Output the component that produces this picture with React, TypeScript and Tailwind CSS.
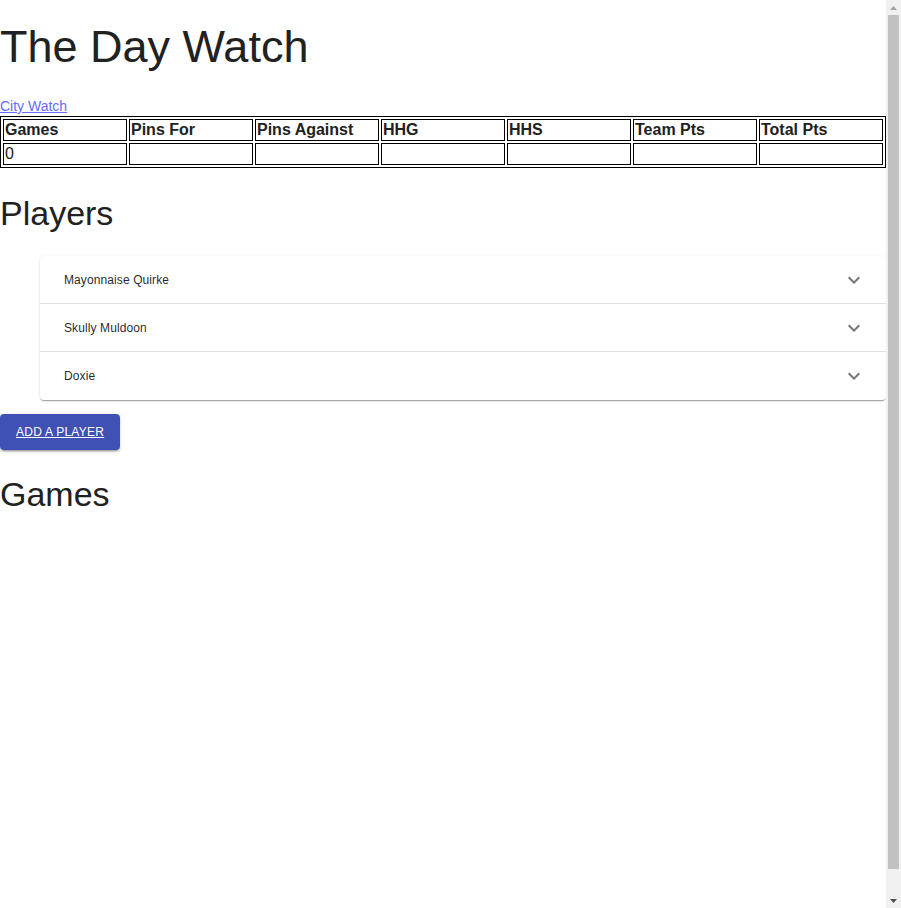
const columns = ['Games', 'Pins For', 'Pins Against', 'HHG', 'HHS', 'Team Pts', 'Total Pts'];
const players = ['Mayonnaise Quirke', 'Skully Muldoon', 'Doxie'];

const ExpandMore = () => (
  <svg viewBox="0 0 24 24" className="w-6 h-6 fill-[#757575]">
    <path d="M16.59 8.59L12 13.17 7.41 8.59 6 10l6 6 6-6z" />
  </svg>
);

// page scrollbar, as the browser draws it
const ScrollBar = () => (
  <div className="w-[15px] h-[908px] sticky top-0 bg-[#f1f1f1] flex flex-col shrink-0">
    <div className="h-[15px] flex items-center justify-center">
      <svg viewBox="0 0 7 4" className="w-[7px] h-[4px] fill-[#a3a3a3]">
        <path d="M0 4 3.5 0 7 4z" />
      </svg>
    </div>
    <div className="mx-[2px] h-[854px] bg-[#c1c1c1]" />
    <div className="flex-1" />
    <div className="h-[15px] flex items-center justify-center">
      <svg viewBox="0 0 7 4" className="w-[7px] h-[4px] fill-[#505050]">
        <path d="M0 0 7 0 3.5 4z" />
      </svg>
    </div>
  </div>
);

const App = () => {
  return (
    <div className="flex items-start bg-white min-h-[908px] font-['Liberation_Sans',Arial,sans-serif] text-[#212121]">
      <div className="w-[886px] shrink-0">
        <h1 className="text-[45px] leading-[52px] font-normal pt-[21px]">The Day Watch</h1>

        <div className="mt-[24px] text-[14px] leading-[18px]">
          <a href="#" className="text-[#646cff] underline">City Watch</a>
        </div>

        {/* Team stats */}
        <table className="mt-[1px] w-full table-fixed border border-black border-separate border-spacing-[2px] text-[16px] leading-[18px]">
          <thead>
            <tr>
              {columns.map((c) => (
                <th key={c} className="border border-black p-[1px] text-left font-bold">{c}</th>
              ))}
            </tr>
          </thead>
          <tbody>
            <tr>
              {columns.map((c, i) => (
                <td key={c} className="border border-black p-[1px] h-[22px]">{i === 0 ? '0' : ''}</td>
              ))}
            </tr>
          </tbody>
        </table>

        <h2 className="mt-[24px] text-[34px] leading-[42px] font-normal">Players</h2>

        <div className="mt-[22px] ml-[40px] bg-white rounded-[4px] shadow-[0px_2px_1px_-1px_rgba(0,0,0,0.2),0px_1px_1px_0px_rgba(0,0,0,0.14),0px_1px_3px_0px_rgba(0,0,0,0.12)]">
          {players.map((p, i) => (
            <div
              key={p}
              className={`flex items-center justify-between h-[48px] pl-[24px] pr-[20px] ${i < players.length - 1 ? 'border-b border-[rgba(0,0,0,0.12)]' : ''}`}
            >
              <span className="text-[12px] tracking-[0.1px] text-[rgba(0,0,0,0.87)]">{p}</span>
              <ExpandMore />
            </div>
          ))}
        </div>

        <button className="mt-[14px] h-[36px] px-[16px] rounded-[4px] bg-[#3f51b5] text-white text-[12px] tracking-[0.25px] uppercase underline shadow-[0px_3px_1px_-2px_rgba(0,0,0,0.2),0px_2px_2px_0px_rgba(0,0,0,0.14),0px_1px_5px_0px_rgba(0,0,0,0.12)]">
          Add a player
        </button>

        <h2 className="mt-[23px] text-[34px] leading-[42px] font-normal">Games</h2>
      </div>
      <ScrollBar />
    </div>
  );
};

export default App;
